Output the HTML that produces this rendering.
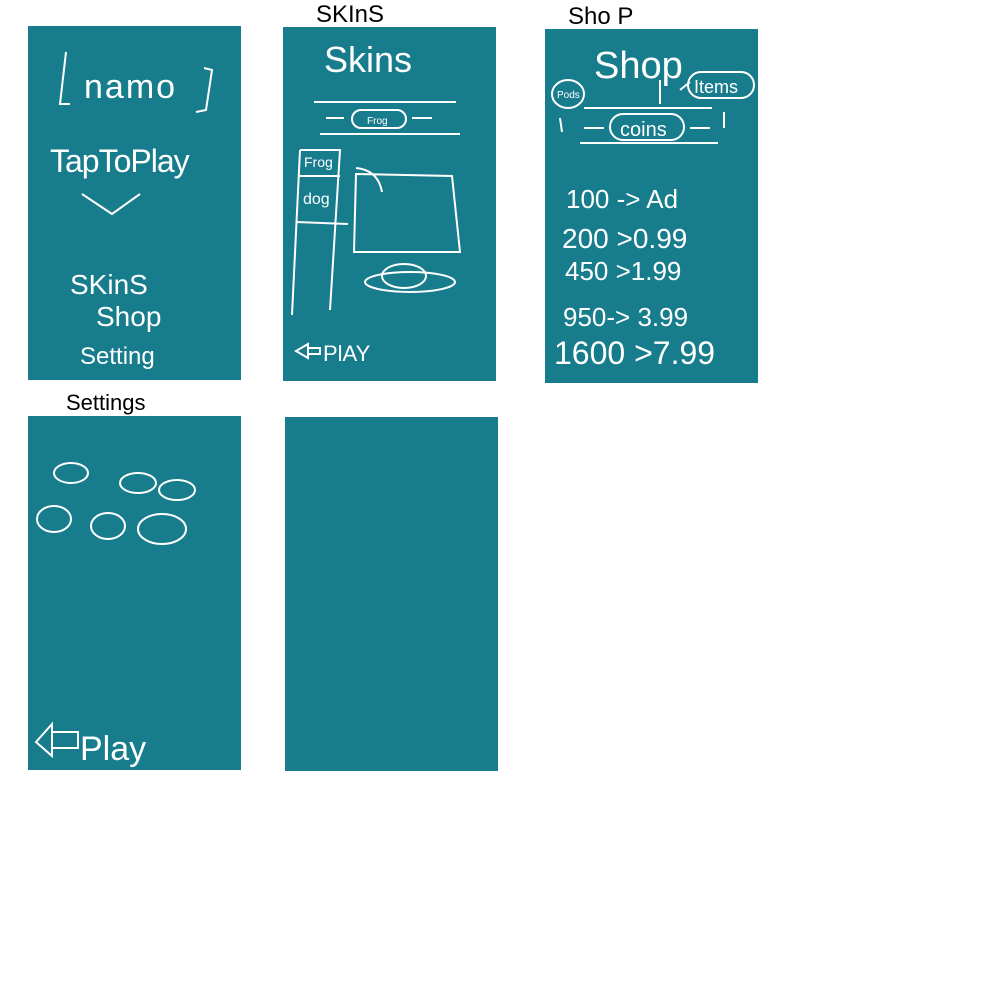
<!DOCTYPE html>
<html><head><meta charset="utf-8"><style>
html,body{margin:0;padding:0;background:#fff;width:1000px;height:1000px;overflow:hidden}
svg{display:block}
text{font-family:"Liberation Sans",sans-serif;fill:#fff}
.k{fill:#000}
</style></head><body>
<svg width="1000" height="1000" viewBox="0 0 1000 1000">
<g fill="#177c8c">
<rect x="28" y="26" width="213" height="354"/>
<rect x="283" y="27" width="213" height="354"/>
<rect x="545" y="29" width="213" height="354"/>
<rect x="28" y="416" width="213" height="354"/>
<rect x="285" y="417" width="213" height="354"/>
</g>
<text class="k" x="316" y="22" font-size="24">SKInS</text>
<text class="k" x="568" y="24" font-size="24">Sho P</text>
<text class="k" x="66" y="410" font-size="22">Settings</text>
<g stroke="#fff" stroke-width="2" fill="none">
<!-- panel 1 -->
<path d="M66 52 L60 104 L70 104 M204 68 L212 70 L206 110 L196 112"/>
<path d="M82 194 L112 214 L140 194"/>
<!-- panel 2 -->
<path d="M314 102 L456 102 M320 134 L460 134"/>
<rect x="352" y="110" width="54" height="18" rx="9"/>
<path d="M344 118 L326 118 M412 118 L432 118"/>
<path d="M300 150 L292 315 M300 150 L340 150 L330 310 M298 176 L340 176 M296 222 L348 224"/>
<path d="M356 174 L452 176 L460 252 L354 252 Z"/>
<path d="M356 168 Q378 170 382 192"/>
<ellipse cx="410" cy="282" rx="45" ry="10"/><ellipse cx="404" cy="276" rx="22" ry="12"/>
<path d="M308 344 L296 351 L308 358 Z M308 348 L320 348 L320 354 L308 354"/>
<!-- panel 3 -->
<ellipse cx="568" cy="94" rx="16" ry="14"/>
<rect x="688" y="72" width="66" height="26" rx="13"/>
<rect x="610" y="114" width="74" height="26" rx="13"/>
<path d="M584 108 L712 108 M580 143 L718 143 M660 80 L660 104 M680 90 L690 82"/>
<path d="M560 118 L562 132 M604 128 L584 128 M690 128 L710 128 M724 112 L724 128"/>
<!-- panel 4 -->
<ellipse cx="71" cy="473" rx="17" ry="10"/><ellipse cx="138" cy="483" rx="18" ry="10"/>
<ellipse cx="177" cy="490" rx="18" ry="10"/><ellipse cx="54" cy="519" rx="17" ry="13"/>
<ellipse cx="108" cy="526" rx="17" ry="13"/><ellipse cx="162" cy="529" rx="24" ry="15"/>
<path d="M52 724 L36 742 L52 756 Z M52 732 L78 732 L78 748 L52 748"/>
</g>
<text x="84" y="98" font-size="34" letter-spacing="2">namo</text>
<text x="50" y="172" font-size="32" letter-spacing="-1">TapToPlay</text>
<text x="70" y="294" font-size="28">SKinS</text>
<text x="96" y="326" font-size="28">Shop</text>
<text x="80" y="364" font-size="24">Setting</text>
<text x="324" y="72" font-size="36">Skins</text>
<text x="367" y="124" font-size="10">Frog</text>
<text x="304" y="167" font-size="14">Frog</text>
<text x="303" y="204" font-size="16">dog</text>
<text x="323" y="361" font-size="22">PlAY</text>
<text x="594" y="78" font-size="38">Shop</text>
<text x="557" y="98" font-size="10">Pods</text>
<text x="694" y="93" font-size="18">Items</text>
<text x="620" y="136" font-size="20">coins</text>
<text x="566" y="208" font-size="26">100 -&gt; Ad</text>
<text x="562" y="248" font-size="28">200 &gt;0.99</text>
<text x="565" y="280" font-size="26">450 &gt;1.99</text>
<text x="563" y="326" font-size="26">950-&gt; 3.99</text>
<text x="554" y="364" font-size="32">1600 &gt;7.99</text>
<text x="80" y="760" font-size="34">Play</text>
</svg>
</body></html>
